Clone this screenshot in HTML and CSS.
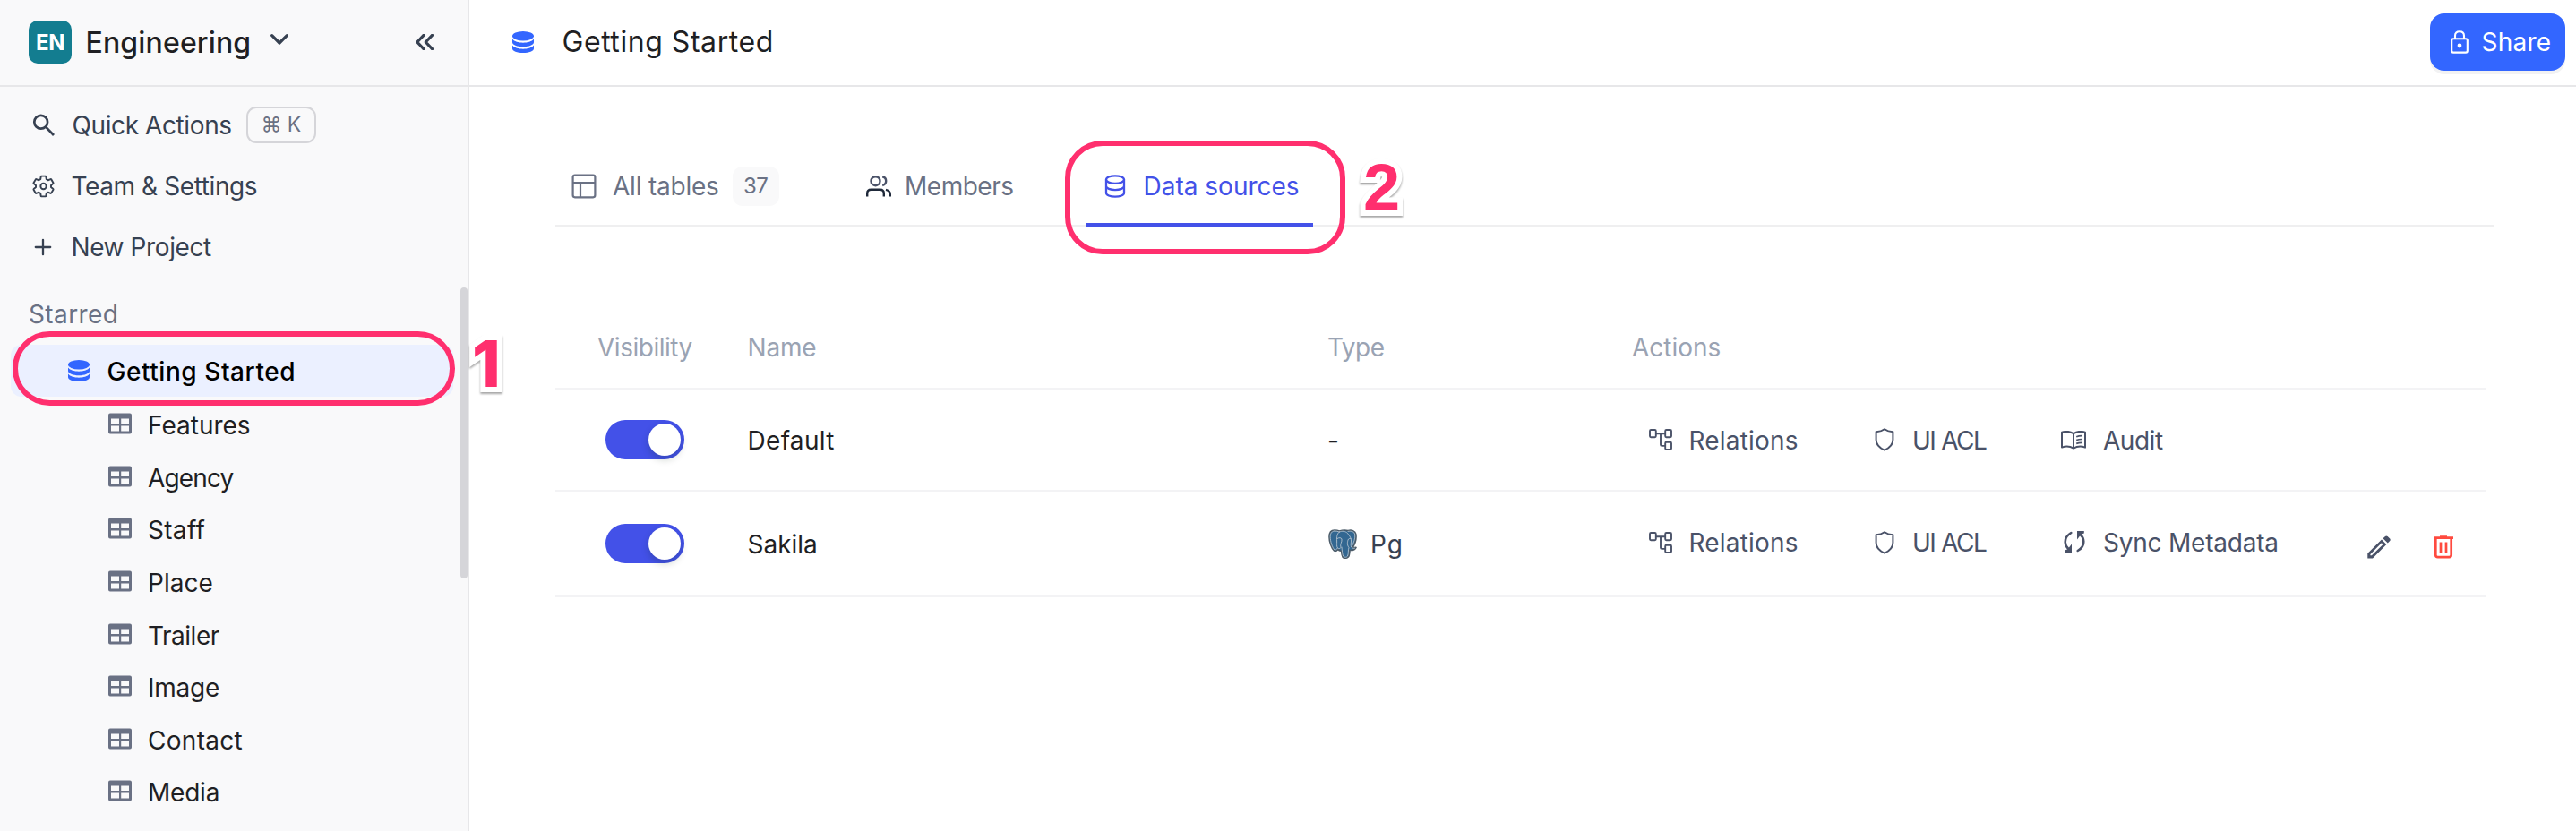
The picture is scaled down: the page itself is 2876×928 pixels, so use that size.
FILE: index.html
```html
<!DOCTYPE html>
<html lang="en">
<head>
<meta charset="utf-8">
<title>Getting Started - Data sources</title>
<link rel="stylesheet" href="styles.css">
</head>
<body>
<svg class="defs" aria-hidden="true">
  <symbol id="db" viewBox="0 0 24 24"><ellipse cx="12" cy="5.2" rx="12" ry="5.2"/><path d="M0 8.6C2.2 11.6 7 12.7 12 12.7S21.800 11.600 24 8.600V12.200C24 15 18.600 17.200 12 17.200S0 15 0 12.200Z"/><path d="M0 15.600C2.200 18.600 7 19.700 12 19.700S21.800 18.600 24 15.600V19.200C24 22 18.600 24 12 24S0 22 0 19.200Z"/></symbol>
  <symbol id="grid" viewBox="0 0 26 24"><path fill-rule="evenodd" d="M2 0.500H24Q26 0.500 26 2.500V21.500Q26 23.500 24 23.500H2Q0 23.500 0 21.500V2.500Q0 0.500 2 0.500ZM3 6.500V12H12V6.500ZM14.200 6.500V12H23V6.500ZM3 14.500V20.500H12V14.500ZM14.200 14.500V20.500H23V14.500Z"/></symbol>
  <symbol id="relations" viewBox="0 0 26 24"><g fill="none" stroke="currentColor" stroke-width="1.900"><rect x="1" y="1" width="6.800" height="8.200" rx="1.200"/><rect x="18.200" y="1" width="6.800" height="8.200" rx="1.200"/><rect x="18.200" y="14.800" width="6.800" height="8.200" rx="1.200"/><path d="M8 5.200H18M13 5.200V17.500Q13 18.900 14.400 18.900H18"/></g></symbol>
  <symbol id="shield" viewBox="0 0 22 26"><path fill="none" stroke="currentColor" stroke-width="2" stroke-linejoin="round" d="M11 1.300Q14.500 3.900 20.400 4.300V13Q20.400 20.400 11 24.700Q1.600 20.400 1.600 13V4.300Q7.500 3.900 11 1.300Z"/></symbol>
</svg>

<div class="app">
  <aside class="sidebar">
    <div class="workspace">
      <span class="badge">EN</span>
      <span class="workspace-name">Engineering</span>
      <svg class="chevron" viewBox="0 0 20 12"><path d="M1.700 1.700 10 10 18.300 1.700"/></svg>
      <svg class="collapse" viewBox="0 0 20 18"><path d="M9 1.300 1.800 9 9 16.700M18.500 1.300 11.300 9 18.500 16.700"/></svg>
    </div>

    <nav class="quick">
      <div class="quick-row">
        <svg class="quick-icon" viewBox="0 0 26 26"><g fill="none" stroke="currentColor" stroke-width="2.700"><circle cx="9.700" cy="9.200" r="7.400"/><path d="M15 14.600 24 24"/></g></svg>
        <span class="quick-text actions-text">Quick Actions</span>
        <kbd class="kbd">⌘ K</kbd>
      </div>
      <div class="quick-row">
        <svg class="quick-icon gear" viewBox="1 1 22 22"><path fill="none" stroke="currentColor" stroke-width="1.700" stroke-linejoin="round" d="M19.430 12.980c.04-.32.07-.64.07-.98 0-.34-.03-.66-.07-.98l2.110-1.650c.19-.15.24-.42.12-.64l-2-3.460c-.09-.16-.26-.25-.44-.25-.06 0-.12.01-.17.03l-2.490 1c-.52-.4-1.080-.73-1.690-.98l-.38-2.650C14.460 2.180 14.250 2 14 2h-4c-.25 0-.46.18-.49.42l-.38 2.650c-.61.25-1.170.59-1.690.98l-2.490-1c-.06-.02-.12-.03-.18-.03-.17 0-.34.09-.43.25l-2 3.460c-.13.22-.07.49.12.64l2.110 1.650c-.04.32-.07.65-.07.98 0 .33.03.66.07.98l-2.110 1.650c-.19.15-.24.42-.12.64l2 3.460c.09.16.26.25.44.25.06 0 .12-.01.17-.03l2.490-1c.52.4 1.080.73 1.690.98l.38 2.650c.03.24.24.42.49.42h4c.25 0 .46-.18.49-.42l.38-2.650c.61-.25 1.170-.59 1.690-.98l2.490 1c.06.02.12.03.18.03.17 0 .34-.09.43-.25l2-3.460c.12-.22.07-.49-.12-.64z"/><circle cx="12" cy="12" r="2.800" fill="none" stroke="currentColor" stroke-width="1.700"/></svg>
        <span class="quick-text">Team &amp; Settings</span>
      </div>
      <div class="quick-row">
        <svg class="quick-icon" viewBox="0 0 26 26"><path fill="none" stroke="currentColor" stroke-width="2.300" stroke-linecap="round" d="M12 4.800V21.200M3.800 13H20.200"/></svg>
        <span class="quick-text">New Project</span>
      </div>
    </nav>

    <div class="section-title">Starred</div>
    <div class="project">
      <svg class="db-icon"><use href="#db"/></svg>
      <span class="project-name">Getting Started</span>
      <span class="ring ring-project"></span>
      <span class="step step-one">1</span>
    </div>
    <ul class="tables">
      <li><svg class="grid-icon"><use href="#grid"/></svg><span>Features</span></li>
      <li><svg class="grid-icon"><use href="#grid"/></svg><span class="tighter">Agency</span></li>
      <li><svg class="grid-icon"><use href="#grid"/></svg><span class="wide">Staff</span></li>
      <li><svg class="grid-icon"><use href="#grid"/></svg><span>Place</span></li>
      <li><svg class="grid-icon"><use href="#grid"/></svg><span class="tight">Trailer</span></li>
      <li><svg class="grid-icon"><use href="#grid"/></svg><span class="snug">Image</span></li>
      <li><svg class="grid-icon"><use href="#grid"/></svg><span class="wide">Contact</span></li>
      <li><svg class="grid-icon"><use href="#grid"/></svg><span class="snug">Media</span></li>
    </ul>
    <span class="scrollbar"></span>
  </aside>

  <main class="main">
    <header class="header">
      <svg class="db-icon"><use href="#db"/></svg>
      <h1 class="title">Getting Started</h1>
      <button class="share">
        <svg class="lock" viewBox="0 0 20 26"><g fill="none" stroke="currentColor" stroke-width="2.100"><rect x="1.200" y="9.200" width="17.600" height="15.400" rx="1.800"/><path d="M5 9V6Q5 1.200 10 1.200T15 6V9"/></g><circle cx="10" cy="17" r="2.400" fill="currentColor"/></svg>
        <span>Share</span>
      </button>
    </header>

    <div class="tabs">
      <div class="tab">
        <svg class="tab-icon layout" viewBox="0 0 28 28"><g fill="none" stroke="currentColor" stroke-width="2.200"><rect x="1.600" y="1.500" width="24.800" height="24.800" rx="2.200"/><path d="M1.600 10H26.400M10 10V26.300"/></g></svg>
        <span class="snug">All tables</span>
        <span class="count">37</span>
      </div>
      <div class="tab">
        <svg class="tab-icon members" viewBox="0 0 28 24"><g fill="none" stroke-width="2.400"><g stroke="#4a5268"><circle cx="10.500" cy="6.200" r="5"/><path d="M18.200 1.200A5 5 0 0 1 18.200 11"/></g><path stroke="#1f293a" d="M1.200 23.500V20Q1.200 15.700 5.500 15.700H15.500Q19.800 15.700 19.800 20V23.500M22 15.900Q26.800 17 26.800 21V23.500"/></g></svg>
        <span class="tight">Members</span>
      </div>
      <div class="tab active">
        <svg class="tab-icon stack" viewBox="0 0 24 26"><g fill="none" stroke="currentColor" stroke-width="2.300"><ellipse cx="12" cy="5.600" rx="10" ry="4.300"/><path d="M2 5.600V20.400C2 22.800 6.500 24.700 12 24.700S22 22.800 22 20.400V5.600M2 12.800C2 15.200 6.500 17.100 12 17.100S22 15.200 22 12.800"/></g></svg>
        <span>Data sources</span>
        <span class="ring ring-tab"></span>
        <span class="step step-two">2</span>
      </div>
    </div>

    <section class="sources">
      <div class="row head">
        <span class="visibility tight">Visibility</span>
        <span class="snug">Name</span>
        <span class="tight">Type</span>
        <span>Actions</span>
      </div>
      <div class="row first">
        <span class="visibility"><i class="toggle"></i></span>
        <span class="name wide">Default</span>
        <span class="dash">-</span>
        <div class="actions">
          <span class="action relations"><svg><use href="#relations"/></svg><b class="wide">Relations</b></span>
          <span class="action acl"><svg><use href="#shield"/></svg><b>UI ACL</b></span>
          <span class="action audit"><svg viewBox="0 0 28 21"><g fill="none" stroke="currentColor" stroke-width="2" stroke-linejoin="round"><path d="M14 3.200Q8 -0.600 1 1.800V18.600Q8 16.200 14 19.600Q20 16.200 27 18.600V1.800Q20 -0.600 14 3.200ZM14 3.200V19.600"/><path stroke-width="1.700" d="M17.200 6.800Q20 5.600 24 5.700M17.200 10.600Q20 9.400 24 9.500M17.200 14.400Q20 13.200 24 13.300"/></g></svg><b class="tight">Audit</b></span>
        </div>
      </div>
      <div class="row second">
        <span class="visibility"><i class="toggle"></i></span>
        <span class="name">Sakila</span>
        <span class="type"><svg class="pg" viewBox="0 0 32 33"><g stroke-linejoin="round" stroke-linecap="round"><path fill="#336791" stroke="#4c5c69" stroke-width="1.600" d="M7 1C3 1 1 4 1 8.500C1 14 3.500 21 6.500 24C8 25.200 9.500 24 11 22.500C11.800 24 13.500 24.300 14.700 24.200C14.700 27 15 29 16 31C17 32.600 20.500 32.800 22.300 31C23.700 29.500 23.700 27 24 23.500C27 23.700 30 22.700 31 20.400C29.500 20.600 28 20.700 27.300 20.200C30 16 31.500 10 30.800 5.500C30 1.500 26 0.600 22 1.500C18 0.600 15.500 1 12.500 2Q10 1 7 1Z"/><path fill="none" stroke="#c3cdd6" stroke-width="0.800" d="M7 2C4 2 2.200 4.500 2.200 8.500C2.200 13.500 4.500 20.500 7 23C8 23.700 9.500 22.200 10.500 21C9 19 9.800 16.500 9.600 13C9.400 9 9.500 5 12.300 3M12.300 3Q10 2 7 2M12.300 3C15.500 1.700 19 2 21.500 4.500C24.500 8 25.500 10.500 25.500 13C25.500 16 24.500 17.500 26 20.300C27 21.400 28.500 21.500 29.500 21.200M22 2.400C26 1.700 29 2.700 29.700 6C30.200 10 28.500 15.500 26 19.500M10 10.500C12 9 14.500 9.500 15 11C15.500 14 13 17 13.800 19.500C14.800 21.500 11.500 22 11 21.500M15 20C15.500 24 15.500 28 16.800 30.300C18 31.700 20.700 31.500 21.500 30C22.700 27.500 22 23 23 20.500C20.500 17 21.500 14 22 12C22.500 10.500 24 10 25.200 10.500"/></g></svg><span class="pg-name">Pg</span></span>
        <div class="actions">
          <span class="action relations"><svg><use href="#relations"/></svg><b class="wide">Relations</b></span>
          <span class="action acl"><svg><use href="#shield"/></svg><b>UI ACL</b></span>
          <span class="action sync"><svg viewBox="0 0 24 24"><path fill="none" stroke="currentColor" stroke-width="2.600" stroke-linecap="round" d="M8.300 2Q1.500 6 1.700 12.300Q1.900 17 5.400 20M15.700 22Q22.500 18 22.300 11.700Q22.100 7 18.600 4"/><path fill="currentColor" d="M9 14.400V24H1.200V21.600L4.500 20.300ZM15 9.600V0H22.800V2.400L19.500 3.700Z"/></svg><b class="snug">Sync Metadata</b></span>
          <svg class="pencil" viewBox="0 0 26 26"><path fill="currentColor" fill-rule="evenodd" d="M16 4.600 21.400 10 6 25.400H0.300V19.900ZM15.900 8.200 3.400 20.900V22.300H4.900L17.500 9.900ZM17.500 3.300 20 0.900Q21.200 -0.100 22.600 0.900L25.200 3.500Q26.200 4.900 25.200 6.100L22.800 8.500Z"/></svg>
          <svg class="trash" viewBox="0 0 22 26"><path fill="none" stroke="currentColor" stroke-width="2.700" d="M0 2.700H22M7 1.500H15M2.300 3V21.800Q2.300 24.200 4.700 24.200H17.300Q19.700 24.200 19.700 21.800V3M8 7.500V20M14 7.500V20"/></svg>
        </div>
      </div>
    </section>
  </main>
</div>
</body>
</html>
```
FILE: styles.css
```css
* { box-sizing: border-box; }
body {
  margin: 0;
  font-family: Inter, "Noto Sans", sans-serif;
  font-size: 28px;
  line-height: 36px;
  color: #1f1f23;
  background: #fff;
}
svg { display: block; flex: none; fill: currentColor; }
.defs { position: absolute; width: 0; height: 0; }
.app { display: flex; width: 2876px; height: 928px; overflow: hidden; }

/* letter spacing steps */
.tighter { letter-spacing: -0.85px; }
.tight { letter-spacing: -0.48px; }
.snug { letter-spacing: -0.22px; }
.wide { letter-spacing: 0.3px; }

/* sidebar */
.sidebar {
  position: relative;
  flex: none;
  width: 524px;
  background: #f9f9fa;
  border-right: 2px solid #e7e7e9;
}
.workspace {
  display: flex;
  align-items: center;
  height: 97px;
  padding: 0 38px 2px 32px;
  border-bottom: 2px solid #e7e7e9;
}
.badge {
  width: 48px;
  height: 48px;
  border-radius: 10px;
  background: #137d90;
  color: #fff;
  font-size: 24px;
  font-weight: 700;
  line-height: 49px;
  text-align: center;
  letter-spacing: -0.5px;
}
.workspace-name {
  margin-left: 15.5px;
  font-size: 32px;
  font-weight: 500;
  letter-spacing: 0.15px;
  padding-top: 2px;
}
.chevron { width: 20px; height: 12px; margin: 0 0 5px 22px; }
.collapse { width: 20px; height: 18px; margin-left: auto; }
.chevron path, .collapse path {
  fill: none;
  stroke: #374151;
  stroke-width: 3.2;
  stroke-linecap: round;
  stroke-linejoin: round;
}
.quick { padding-top: 9px; color: #374151; }
.quick-row { display: flex; align-items: center; height: 68px; padding-left: 36px; }
.quick-icon { width: 26px; height: 26px; margin-right: 17.5px; }
.gear { width: 25px; margin-right: 18.5px; }
.quick-text { letter-spacing: -0.4px; }
.actions-text { margin-left: 1px; }
.kbd {
  width: 78px;
  height: 41px;
  margin: 0 0 2px 16px;
  border: 2px solid #d5d5d9;
  border-radius: 11px;
  color: #6a7184;
  font: 23px/36px Inter, "Noto Sans", sans-serif;
  letter-spacing: -0.6px;
  word-spacing: 1px;
  text-align: center;
}
.section-title {
  height: 75px;
  padding: 23px 0 0 32px;
  color: #6a7184;
  letter-spacing: 0.4px;
}
.project {
  position: relative;
  display: flex;
  align-items: center;
  width: 494px;
  height: 58px;
  margin-left: 12px;
  padding-left: 64px;
  border-radius: 12px;
  background: #ebf0ff;
}
.db-icon { width: 24px; height: 24px; color: #3366ff; }
.project-name {
  margin-left: 19.5px;
  padding-top: 1px;
  font-weight: 500;
  letter-spacing: 0.55px;
  color: #000;
}
.tables { margin: 0; padding: 3px 0 0; list-style: none; }
.tables li { display: flex; align-items: center; height: 58.6px; padding-left: 121px; }
.grid-icon { width: 26px; height: 24px; margin: 0 18px 4px 0; color: #6a7184; }
.scrollbar {
  position: absolute;
  right: 0;
  top: 321px;
  width: 8px;
  height: 325px;
  border-radius: 4px;
  background: #d5d5d9;
}

/* callouts */
.ring { position: absolute; border: 6px solid #ff2f6e; }
.ring-project { left: 2px; top: -15px; width: 494px; height: 83px; border-radius: 42px; }
.ring-tab { left: -23px; top: 3px; width: 313px; height: 127px; border-radius: 42px; }
.step {
  position: absolute;
  z-index: 2;
  font-weight: 700;
  line-height: 74px;
  color: #ff2f6e;
  -webkit-text-stroke: 12px #fff;
  paint-order: stroke fill;
  stroke-linejoin: round;
  filter: drop-shadow(0 2px 1px rgba(0, 0, 0, 0.35));
}
.step-one { left: 515px; top: -16px; font-size: 72px; font-weight: 800; }
.step-two { left: 310px; top: 19px; font-family: "Liberation Sans", Arial, sans-serif; font-size: 74px; }

/* header */
.main { flex: 1; min-width: 0; }
.header {
  display: flex;
  align-items: center;
  height: 97px;
  padding: 0 12px 2px 48px;
  border-bottom: 2px solid #e7e7e9;
}
.title {
  margin: 0 0 0 31.5px;
  padding-top: 1px;
  font-size: 32px;
  font-weight: 400;
  letter-spacing: 0.55px;
}
.share {
  display: flex;
  align-items: center;
  width: 151px;
  height: 64px;
  margin-left: auto;
  padding: 0 0 0 23px;
  border: 0;
  border-radius: 16px;
  background: #3366ff;
  color: #fff;
  font: 28px/36px Inter, sans-serif;
  letter-spacing: 0.25px;
  box-shadow: 0 4px 0 #f2f2f3;
}
.lock { width: 20px; height: 26px; margin-right: 14.5px; }

/* tabs */
.tabs {
  display: flex;
  height: 156px;
  width: 2165px;
  margin-left: 96px;
  padding-top: 57px;
  border-bottom: 2px solid #efeff0;
  color: #6a7184;
}
.tab {
  position: relative;
  display: flex;
  align-items: center;
  height: 99px;
  padding: 8px 0 0 18px;
}
.tab:nth-child(1) { width: 329px; }
.tab:nth-child(2) { width: 263px; }
.tab:nth-child(3) { width: 254px; }
.tab-icon { height: 28px; }
.layout { width: 28px; margin-right: 18px; }
.members { width: 28px; height: 24px; margin-right: 15px; }
.stack { width: 24px; height: 26px; margin-right: 19.5px; }
.count {
  width: 52px;
  height: 44px;
  margin-left: 15px;
  border-radius: 11px;
  background: #f9f9fa;
  font-size: 24px;
  line-height: 44px;
  letter-spacing: -0.6px;
  text-align: center;
}
.tab.active {
  padding: 12px 0 0 21px;
  color: #4351e8;
  border-bottom: 4px solid #4351e8;
}

/* table */
.sources { width: 2156px; margin: 90px 0 0 96px; }
.row {
  display: grid;
  grid-template-columns: 214.5px 647.5px 340px 1fr;
  align-items: center;
  border-bottom: 2px solid #f3f3f5;
}
.head { height: 92px; color: #9aa3b3; }
.visibility { padding-left: 47px; }
.first { height: 114px; }
.second { height: 118px; }
.toggle {
  display: flex;
  justify-content: flex-end;
  width: 88px;
  height: 44px;
  margin-left: 9px;
  padding: 4px;
  border-radius: 22px;
  background: #4351e8;
}
.toggle::after {
  content: "";
  width: 36px;
  height: 36px;
  border-radius: 50%;
  background: #fff;
  box-shadow: 0 4px 8px rgba(0, 35, 11, 0.2);
}
.name, .dash, .pg-name { padding-top: 2px; }
.type { display: flex; align-items: center; color: #374151; }
.pg { width: 32px; height: 33px; margin-left: 1px; }
.pg-name { margin-left: 15px; letter-spacing: 1px; }
.actions { display: flex; align-items: center; padding-left: 19px; color: #4a5268; }
.action { display: flex; align-items: center; }
.action b { font-weight: 400; }
.first .action b { padding-top: 2px; }
.relations { width: 252px; }
.relations svg { width: 26px; height: 24px; margin: 0 18.5px 1px 0; }
.relations b { letter-spacing: 0.2px; }
.acl { width: 208px; letter-spacing: -1.5px; word-spacing: 0.5px; }
.acl svg { width: 22px; height: 26px; margin-right: 20px; }
.audit svg { width: 28px; height: 21px; margin-right: 19px; }
.sync { padding-left: 3px; width: 342px; }
.sync svg { width: 24px; height: 24px; margin: 0 20px 2px 0; }
.second .action { padding-bottom: 2px; }
.pencil { width: 26px; height: 26px; margin-top: 7px; }
.trash { width: 22px; height: 26px; margin: 7px 0 0 48px; color: #ff4a3f; }
```
